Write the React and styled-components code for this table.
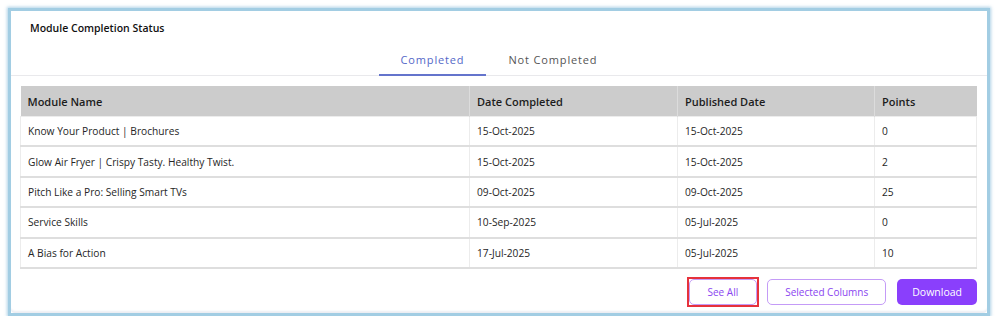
import React from "react";
import styled, { createGlobalStyle } from "styled-components";

const GlobalStyle = createGlobalStyle`
  html, body {
    margin: 0;
    padding: 0;
    background: #ffffff;
    font-family: "Open Sans", "Liberation Sans", sans-serif;
  }
`;

const rows = [
  ["Know Your Product | Brochures", "15-Oct-2025", "15-Oct-2025", "0"],
  ["Glow Air Fryer | Crispy Tasty. Healthy Twist.", "15-Oct-2025", "15-Oct-2025", "2"],
  ["Pitch Like a Pro: Selling Smart TVs", "09-Oct-2025", "09-Oct-2025", "25"],
  ["Service Skills", "10-Sep-2025", "05-Jul-2025", "0"],
  ["A Bias for Action", "17-Jul-2025", "05-Jul-2025", "10"],
];

function App() {
  return (
    <>
      <GlobalStyle />
      <Frame>
        <Card>
          <Title>Module Completion Status</Title>
          <Tabs>
            <Tab active>Completed</Tab>
            <Tab>Not Completed</Tab>
          </Tabs>
          <TableWrap>
            <Table>
              <colgroup>
                <col style={{ width: 449 }} />
                <col style={{ width: 208 }} />
                <col style={{ width: 197 }} />
                <col style={{ width: 102 }} />
              </colgroup>
              <thead>
                <tr>
                  <Th>Module Name</Th>
                  <Th>Date Completed</Th>
                  <Th>Published Date</Th>
                  <Th>Points</Th>
                </tr>
              </thead>
              <tbody>
                {rows.map((r) => (
                  <tr key={r[0]}>
                    {r.map((c, i) => (
                      <Td key={i}>{c}</Td>
                    ))}
                  </tr>
                ))}
              </tbody>
            </Table>
          </TableWrap>
          <Actions>
            <Highlight>
              <OutlineButton pad={18}>See All</OutlineButton>
            </Highlight>
            <OutlineButton pad={17}>Selected Columns</OutlineButton>
            <SolidButton>Download</SolidButton>
          </Actions>
        </Card>
      </Frame>
    </>
  );
}

export default App;

const Frame = styled.div`
  margin: 8px 7px 0 8px;
  height: 302px;
  border: 3px solid #a2cde3;
  box-shadow: 0 0 3px 1px rgba(140, 190, 220, 0.7);
  background: #ffffff;
`;

const Card = styled.div`
  height: 100%;
  box-sizing: border-box;
  background: #ffffff;
  border-radius: 0 0 4px 4px;
  box-shadow: inset 0 -3px 2px -1px #eceef3;
  display: flex;
  flex-direction: column;
`;

const Title = styled.div`
  padding: 10px 0 0 19px;
  height: 18px;
  font-size: 10.5px;
  font-weight: 600;
  color: #111;
  line-height: 14px;
`;

const Tabs = styled.div`
  display: flex;
  justify-content: center;
  margin-top: 4px;
  border-bottom: 1px solid #e9e9ec;
`;

const Tab = styled.div`
  padding: 9px 22px 7px;
  font-size: 11px;
  line-height: 15px;
  letter-spacing: 0.85px;
  color: ${(p) => (p.active ? "#5468c8" : "#555")};
  border-bottom: 2px solid ${(p) => (p.active ? "#6474cc" : "transparent")};
  margin-bottom: -1px;
`;

const TableWrap = styled.div`
  padding: 10px 10px 0 9px;
`;

const Table = styled.table`
  width: 100%;
  border-collapse: collapse;
  table-layout: fixed;
`;

const Th = styled.th`
  background: #cccccc;
  height: 30px;
  padding: 0 7px;
  text-align: left;
  font-size: 11px;
  font-weight: 600;
  color: #1c1c1c;
  border-left: 1px solid #dcdcdc;
  &:first-child {
    border-left: none;
  }
`;

const Td = styled.td`
  height: 28.4px;
  padding: 0 7px;
  font-size: 10.2px;
  color: #262626;
  border: 1px solid #ececec;
  border-bottom: 2px solid #dedede;
`;

const Actions = styled.div`
  display: flex;
  justify-content: flex-end;
  align-items: center;
  gap: 8px;
  padding: 8px 10px 0 0;
`;

const Highlight = styled.div`
  display: flex;
  border: 2px solid #e6323c;
`;

const OutlineButton = styled.button`
  height: 26px;
  padding: 0 ${(p) => p.pad}px;
  border: 1px solid #c49bf7;
  border-radius: 5px;
  background: #ffffff;
  color: #8a45f0;
  font-family: inherit;
  font-size: 10px;
  cursor: pointer;
`;

const SolidButton = styled.button`
  height: 26px;
  margin-left: 3px;
  padding: 0 15px;
  border: none;
  border-radius: 5px;
  background: #8a3ffc;
  color: #ffffff;
  font-family: inherit;
  font-size: 10.5px;
  cursor: pointer;
`;
